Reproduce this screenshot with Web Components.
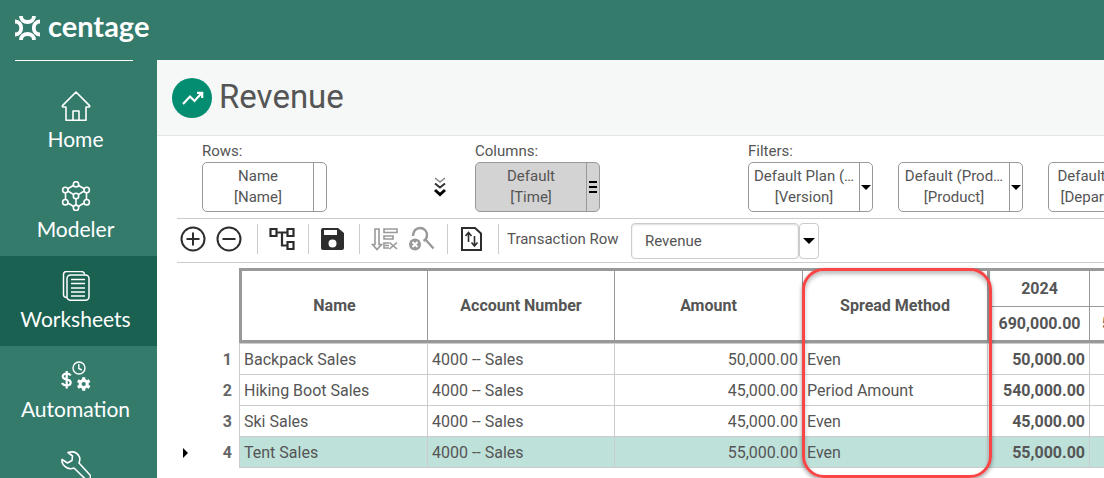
<!DOCTYPE html>
<html lang="en">
<head>
<meta charset="utf-8">
<title>Revenue</title>
<style>
  body { margin: 0; font-family: Roboto, "Liberation Sans", sans-serif; color: #555; background: #fff; }
</style>
</head>
<body>
<app-shell>
  <app-brand slot="brand"></app-brand>
  <side-nav slot="nav">
    <nav-item label="Home">
      <svg width="30" height="30" viewBox="0 0 30 30" fill="none" stroke="#fff" stroke-width="1.600" stroke-linejoin="round"><path d="M1.500 14.600 15 1l13.500 13.600c.5 1-.2 1.400-.8 1.400H25v13.300H5V16H2.300c-.8 0-1.200-.7-.8-1.400z"/><path d="M12 29v-9h6v9"/></svg>
    </nav-item>
    <nav-item label="Modeler">
      <svg width="30" height="30" viewBox="0 0 30 30" fill="none" stroke="#fff" stroke-width="1.600"><path d="M12.700 4.300 6.800 7.800M17.300 4.300l5.900 3.500M4.500 11.700v7.100M25.500 11.700v7.100M6.800 22l5.900 3.500M23.200 22l-5.900 3.500M15 17.500v7M6.800 10l6 3.600M23.200 10l-6 3.600"/><circle cx="15" cy="3.300" r="2.700"/><circle cx="4.300" cy="9" r="2.700"/><circle cx="25.700" cy="9" r="2.700"/><circle cx="15" cy="15" r="2.700"/><circle cx="4.300" cy="21.200" r="2.700"/><circle cx="25.700" cy="21.200" r="2.700"/><circle cx="15" cy="26.800" r="2.700"/></svg>
    </nav-item>
    <nav-item label="Worksheets" current>
      <svg width="30" height="30" viewBox="0 0 30 30" fill="none" stroke="#fff" stroke-width="1.500"><rect x="6" y="4" width="22" height="25.300" rx="3.500"/><path d="M6 26.500c-2 0-3.500-1-3.500-3V3.500c0-2 1-3 3-3H20c2 0 3.500 1 3.500 3M10 8.500h14M10 12.500h14M10 17h14M10 21h14M10 25h14"/></svg>
    </nav-item>
    <nav-item label="Automation">
      <svg width="30" height="30" viewBox="0 0 30 30" fill="none" stroke="#fff"><circle cx="18" cy="7" r="6" stroke-width="1.400"/><path d="M17.800 3v4.500l3 1.500" stroke-width="1.400"/><path d="M9.700 14.500C8.800 13 7.300 12.600 5.500 12.600c-2.200 0-3.800 1-3.800 2.800 0 4.200 8 1.800 8 6 0 2-1.700 3-4.200 3-2 0-3.700-.7-4.500-2.300M5.700 10v17.500" stroke-width="2.200"/><circle cx="22.700" cy="23" r="3.600" stroke-width="3"/><path d="M22.700 16.200v3M22.700 26.800v3M16.800 19.600l2.600 1.500M26 25l2.600 1.400M28.600 19.600 26 21M19.400 25l-2.600 1.400" stroke-width="3.200"/></svg>
    </nav-item>
    <nav-item name="Tools">
      <svg width="30" height="30" viewBox="0 0 30 30" fill="none" stroke="#fff" stroke-width="1.600" stroke-linejoin="round"><path d="M1 8.500 6.500 12l4.500-2.500.5-4.500L7 1.500c5-1.500 9.500 0 11.500 4.500.8 2.300.3 4-.5 6L29 24c2 3-2 6.500-4.500 4.200L13 17c-2.500 1-5 1-7.500-.5C2.300 14.500.5 12 1 8.500z"/></svg>
    </nav-item>
  </side-nav>
  <page-title>Revenue</page-title>
  <layout-bar></layout-bar>
  <tool-bar></tool-bar>
  <data-grid></data-grid>
</app-shell>

<script>
function define(name, html, setup) {
  const template = document.createElement('template');
  template.innerHTML = html;
  customElements.define(name, class extends HTMLElement {
    constructor() {
      super();
      this.attachShadow({ mode: 'open' }).append(template.content.cloneNode(true));
    }
    connectedCallback() { if (setup) setup(this, this.shadowRoot); }
  });
}

define('app-shell', `
<style>
  :host { display: flex; height: 100vh; overflow: hidden; background: #347b6c; }
  aside { flex: 0 0 157px; min-width: 0; }
  .content { flex: 1; min-width: 0; padding-top: 60px; display: flex; }
  main { flex: 1; min-width: 0; background: #fff; }
</style>
<aside><slot name="brand"></slot><slot name="nav"></slot></aside>
<div class="content"><main><slot></slot></main></div>`);

define('app-brand', `
<style>
  :host { display: block; padding: 0 24px 0 15px; }
  div { display: flex; align-items: center; gap: 8px; height: 61px; box-sizing: border-box; padding-bottom: 4px; border-bottom: 1px solid #fff; margin-bottom: 15px; color: #fff; }
  svg { flex: none; }
  span { font: 700 29px/32px Lato, sans-serif; padding-bottom: 4px; }
</style>
<div>
  <svg width="25" height="24" viewBox="0 0 25 24" fill="none" stroke="#fff" stroke-width="3.800"><path d="M6 0c0 4 3 6 6.500 6S19 4 19 0M6 24c0-4 3-6 6.500-6s6.500 2 6.500 6M0 5.500c4 0 6.200 3 6.200 6.500S4 18.500 0 18.500M25 5.500c-4 0-6.200 3-6.200 6.500s2.200 6.500 6.200 6.500"/></svg>
  <span>centage</span>
</div>`);

define('side-nav', `
<style>:host { display: block; } nav { display: flex; flex-direction: column; }</style>
<nav aria-label="Main"><slot></slot></nav>`);

define('nav-item', `
<style>
  :host { display: block; }
  :host([current]) { background: #1b6152; }
  a { display: flex; flex-direction: column; align-items: center; padding: 15px 6px 9px 0; color: #fff; text-decoration: none; font: 400 21px/36px Lato, sans-serif; }
  ::slotted(svg) { display: block; }
</style>
<a href="#"><slot></slot></a>`, (host, root) => {
  const link = root.querySelector('a');
  if (host.hasAttribute('label')) link.append(host.getAttribute('label'));
  else link.setAttribute('aria-label', host.getAttribute('name'));
});

define('page-title', `
<style>
  :host { display: flex; align-items: center; gap: 7px; height: 75px; padding-left: 15px; background: #f6f8f8; border-bottom: 1px solid #e4e4e4; }
  h1 { margin: 0; font-size: 33px; line-height: 40px; font-weight: 400; color: #555; padding-bottom: 2px; }
</style>
<svg width="40" height="40" viewBox="0 0 40 40"><circle cx="20" cy="20" r="20" fill="#048d71"/><path d="m11 26 7-7.500 4.500 4.500 7-7.700M25 14.800h5.200V20" fill="none" stroke="#fff" stroke-width="2.200"/></svg>
<h1><slot></slot></h1>`);

define('field-chip', `
<style>
  :host { display: block; flex: none; }
  button { display: flex; width: 125px; height: 50px; padding: 0; border: 1px solid #999; border-radius: 5px; background: #fff; color: #555; font: 400 15px/21px Roboto, sans-serif; overflow: hidden; }
  :host([active]) button { background: #d3d3d3; }
  .text { flex: 1; min-width: 0; height: 48px; box-sizing: border-box; padding: 3px 4px 0; border-right: 1px solid #999; }
  .text span { display: block; overflow: hidden; text-overflow: ellipsis; white-space: nowrap; }
  .handle { flex: 0 0 12px; height: 48px; display: grid; place-items: center; }
  svg { display: none; }
  :host([handle=menu]) .menu, :host([handle=drop]) .drop { display: block; }
</style>
<button type="button">
  <span class="text"><span class="top"></span><span class="dim"></span></span>
  <span class="handle">
    <svg class="menu" width="8" height="12"><path d="M0 1h8M0 6h8M0 11h8" stroke="#000" stroke-width="2"/></svg>
    <svg class="drop" width="10" height="5"><path d="M0 0h10L5 5z"/></svg>
  </span>
</button>`, (host, root) => {
  root.querySelector('.top').textContent = host.getAttribute('member');
  root.querySelector('.dim').textContent = '[' + host.getAttribute('dimension') + ']';
});

define('layout-bar', `
<style>
  :host { display: block; margin-left: 20px; padding: 5px 0 6px 25px; border-bottom: 1px solid #ccc; overflow: hidden; }
  .bar { display: flex; }
  section { flex: 0 0 273px; }
  .filters { flex: 1; min-width: 0; }
  h2 { margin: 0 0 1px; font-size: 15px; line-height: 20px; font-weight: 400; }
  .row { display: flex; align-items: center; gap: 25px; }
  .rows { justify-content: space-between; padding-right: 28px; }
</style>
<div class="bar">
  <section><h2>Rows:</h2><div class="row rows"><field-chip member="Name" dimension="Name"></field-chip>
    <svg width="14" height="20" viewBox="0 0 14 20" fill="none"><path d="m2 1 5 4 5-4" stroke="#888" stroke-width="1.500"/><path d="m2 6.500 5 4 5-4" stroke="#333" stroke-width="2"/><path d="m2 13 5 4.500 5-4.500" stroke="#000" stroke-width="3"/></svg></div></section>
  <section><h2>Columns:</h2><div class="row"><field-chip active handle="menu" member="Default" dimension="Time"></field-chip></div></section>
  <section class="filters"><h2>Filters:</h2><div class="row">
    <field-chip handle="drop" member="Default Plan (…" dimension="Version"></field-chip>
    <field-chip handle="drop" member="Default (Prod…" dimension="Product"></field-chip>
    <field-chip handle="drop" member="Default (Dep…" dimension="Department"></field-chip>
  </div></section>
</div>`);

define('tool-bar', `
<style>
  :host { display: flex; align-items: center; height: 43px; margin-left: 20px; border-bottom: 1px solid #ccc; font-size: 15px; }
  .group { display: flex; align-items: center; gap: 10px; height: 30px; padding: 0 11px; border-right: 1px solid #ccc; margin-bottom: 4px; }
  .first { padding-left: 3px; padding-right: 15px; }
  .file { padding-right: 15px; }
  button { display: block; padding: 0; border: 0; background: none; }
  svg { display: block; }
  label { flex: 0 0 132px; box-sizing: border-box; padding-left: 8px; margin-bottom: 4px; line-height: 20px; white-space: nowrap; }
  .combo { display: flex; }
  input { box-sizing: border-box; width: 168px; height: 36px; padding: 0 13px; border: 1px solid #ccc; border-radius: 4px; font: 400 15px Roboto, sans-serif; color: #555; box-shadow: inset 0 1px 2px #ddd; }
  .combo button { width: 20px; height: 36px; border: 1px solid #ccc; border-radius: 4px; background: #fff; display: grid; place-items: center; }
</style>
<div class="group first">
  <button aria-label="Add"><svg width="26" height="26" fill="none" stroke="#2d2d2d" stroke-width="2"><circle cx="13" cy="13" r="11.500"/><path d="M6.500 13h13M13 6.500v13"/></svg></button>
  <button aria-label="Remove"><svg width="26" height="26" fill="none" stroke="#2d2d2d" stroke-width="2"><circle cx="13" cy="13" r="11.500"/><path d="M6.500 13h13"/></svg></button>
</div>
<div class="group">
  <button aria-label="Hierarchy"><svg width="28" height="24" fill="none" stroke="#2d2d2d" stroke-width="2.200"><path d="M1.500 2h6v7h-6zM18.500 2h6v7h-6zM18.500 15h6v7h-6zM7.500 5.500h11M13 5.500v13h5.500"/></svg></button>
</div>
<div class="group">
  <button aria-label="Save"><svg width="28" height="24"><path fill="#2d2d2d" fill-rule="evenodd" d="M3 1h15l6 5v15a2 2 0 0 1-2 2H3a2 2 0 0 1-2-2V3a2 2 0 0 1 2-2zM4 3v5h13V3zM12.500 12.500a4 4 0 1 0 0 8 4 4 0 0 0 0-8z"/></svg></button>
</div>
<div class="group">
  <button aria-label="Clear sort"><svg width="28" height="24" fill="none" stroke="#999" stroke-width="1.600"><path d="M4 2h4v15.500h2.500L6 22.500l-4.500-5H4zM13 2h13v3.500H13zM13 9h9v3h-9zM18 16h-5v5h5M14 18.500h4M18.500 15.500l7.500 6.500M26 15.500 18.500 22"/></svg></button>
  <button aria-label="Clear search"><svg width="27" height="26" fill="none" stroke="#999"><path d="M4 10c0-5 3-8 7-8s7 3 7 7-2 5-3.500 6M16 13l8.500 9.500" stroke-width="2.400"/><circle cx="6" cy="18.500" r="6" fill="#999" stroke="none"/><path d="m3.500 16 5 5M8.500 16l-5 5" stroke="#fff" stroke-width="2"/></svg></button>
</div>
<div class="group file">
  <button aria-label="Import and export"><svg width="24" height="24" fill="none" stroke="#2d2d2d"><path d="M3 1h13l6 5.500V23H3z" stroke-width="2"/><path d="M9.500 15V5.500M6.500 9l3-3.500 3 3.500M15.500 9v9.500M12.500 15.500l3 3.500 3-3.500" stroke-width="1.600"/></svg></button>
</div>
<label for="row">Transaction Row</label>
<div class="combo"><input id="row" type="text" value="Revenue"><button aria-label="Open list"><svg width="12" height="6"><path d="M0 0h12L6 6z"/></svg></button></div>`);

define('data-grid', `
<style>
  :host { display: block; overflow: hidden; padding: 5px 0 20px 20px; font-size: 16px; }
  .wrap { position: relative; }
  table { table-layout: fixed; width: 1012px; border-spacing: 0; }
  th, td { box-sizing: border-box; padding: 0 4px; text-align: left; white-space: nowrap; overflow: hidden; }
  thead th { border: 0 solid #999; border-left-width: 1px; border-top-width: 3px; text-align: center; height: 38px; }
  thead tr + tr th { border-top-width: 1px; height: 37px; }
  thead th.thick { border-left-width: 3px; }
  thead th[rowspan], thead tr + tr th { border-bottom-width: 3px; }
  thead td { border: 0; }
  thead th.clip { text-align: left; padding-left: 12px; }
  tbody td { border: 0 solid #ccc; border-left-width: 1px; border-bottom-width: 1px; height: 31px; }
  tbody tr:first-child td { border-top-width: 1px; height: 32px; }
  tbody th { text-align: right; color: #666; padding-right: 7px; }
  tbody td.num { text-align: right; }
  tbody td.total { font-weight: 700; }
  tr.selected td { background: #bee1da; }
  .mark { display: flex; align-items: center; justify-content: space-between; padding-left: 2px; }
  .ring { position: absolute; left: 625px; width: 190px; top: 0; bottom: -10px; box-sizing: border-box; border: 3px solid #f94545; border-radius: 22px; box-shadow: 0 2px 4px #0006, inset 0 3px 4px #0004; pointer-events: none; }
</style>
<div class="wrap">
  <table>
    <colgroup><col style="width:62px"><col style="width:188px"><col style="width:187px"><col style="width:188px"><col style="width:185px"><col style="width:102px"><col style="width:100px"></colgroup>
    <thead>
      <tr><td rowspan="2"></td><th rowspan="2" class="thick">Name</th><th rowspan="2">Account Number</th><th rowspan="2">Amount</th><th rowspan="2">Spread Method</th><th class="thick">2024</th><th></th></tr>
      <tr><th class="thick">690,000.00</th><th class="clip">57,500.00</th></tr>
    </thead>
    <tbody></tbody>
  </table>
  <div class="ring"></div>
</div>`, (host, root) => {
  const rows = [
    ['Backpack Sales', '50,000.00', 'Even', '50,000.00'],
    ['Hiking Boot Sales', '45,000.00', 'Period Amount', '540,000.00'],
    ['Ski Sales', '45,000.00', 'Even', '45,000.00'],
    ['Tent Sales', '55,000.00', 'Even', '55,000.00']
  ];
  root.querySelector('tbody').innerHTML = rows.map(([name, amount, spread, total], i) => {
    const last = i === rows.length - 1;
    const number = last ? '<span class="mark"><svg width="5" height="10"><path d="M0 0v10l5-5z"/></svg>' + (i + 1) + '</span>' : i + 1;
    return `<tr${last ? ' class="selected"' : ''}><th scope="row">${number}</th><td>${name}</td><td>4000 -- Sales</td><td class="num">${amount}</td><td>${spread}</td><td class="num total">${total}</td><td></td></tr>`;
  }).join('');
});
</script>
</body>
</html>
